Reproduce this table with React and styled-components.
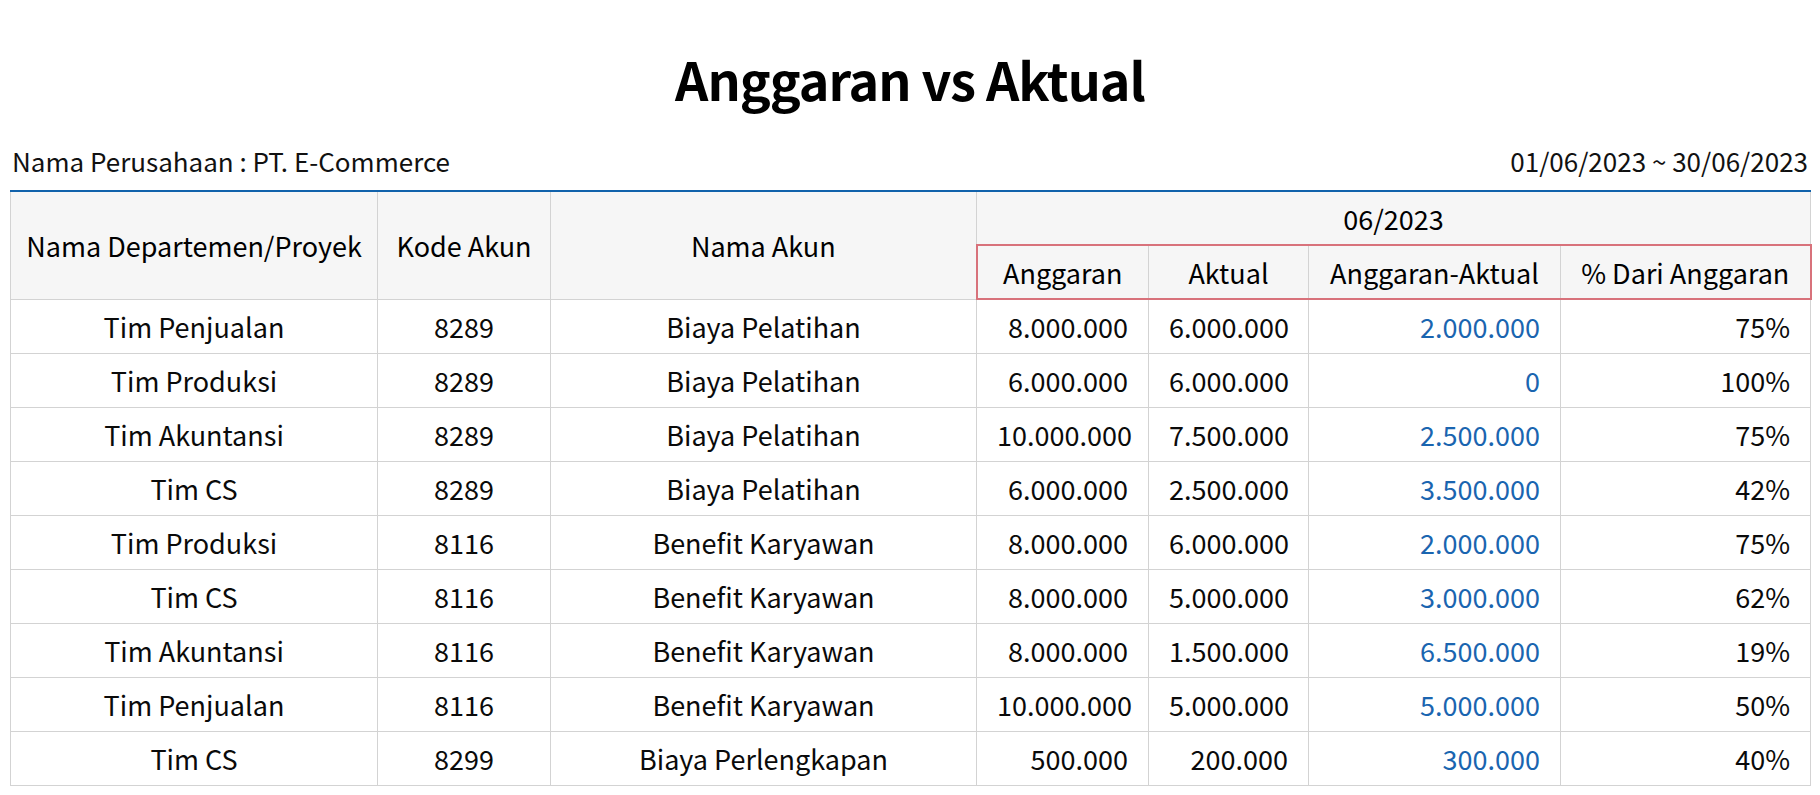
import React from "react";
import styled, { createGlobalStyle, css } from "styled-components";

const GlobalStyle = createGlobalStyle`
  body {
    margin: 0;
    background: #fff;
    font-family: "Noto Sans CJK KR", "Noto Sans", sans-serif;
    color: #111;
  }
`;

const Page = styled.div`
  padding: 0 10px;
`;

const Title = styled.h1`
  margin: 46px 0 0;
  font-size: 52px;
  line-height: 66px;
  letter-spacing: -1px;
  font-weight: 700;
  text-align: center;
  color: #000;
`;

const InfoBar = styled.div`
  display: flex;
  justify-content: space-between;
  align-items: flex-end;
  margin-top: 33px;
  padding: 0 2px 13px;
  font-size: 26px;
  line-height: 32px;
`;

const Table = styled.table`
  width: 1800px;
  border-collapse: collapse;
  table-layout: fixed;
  border-top: 2px solid #1162ab;
`;

const Th = styled.th`
  height: 52px;
  padding: 0;
  background: #f6f6f6;
  border: 1px solid #d3d3d3;
  border-top: none;
  font-size: 27px;
  font-weight: 400;
  text-align: center;
  vertical-align: middle;
  color: #000;
  ${(p) =>
    p.$marked &&
    css`
      border-top: 2px solid #d8727b;
      border-bottom: 2px solid #d8727b;
    `}
  ${(p) => p.$first && css`border-left: 2px solid #d8727b;`}
  ${(p) => p.$last && css`border-right: 2px solid #d8727b;`}
`;

const Td = styled.td`
  height: 53px;
  padding: 0 20px;
  border: 1px solid #d3d3d3;
  font-size: 27px;
  text-align: ${(p) => (p.$num ? "right" : "center")};
  color: ${(p) => (p.$blue ? "#1a65b0" : "#0a0a0a")};
  white-space: nowrap;
`;

const columns = [367, 173, 426, 172, 160, 252, 250];

const rows = [
  ["Tim Penjualan", "8289", "Biaya Pelatihan", "8.000.000", "6.000.000", "2.000.000", "75%"],
  ["Tim Produksi", "8289", "Biaya Pelatihan", "6.000.000", "6.000.000", "0", "100%"],
  ["Tim Akuntansi", "8289", "Biaya Pelatihan", "10.000.000", "7.500.000", "2.500.000", "75%"],
  ["Tim CS", "8289", "Biaya Pelatihan", "6.000.000", "2.500.000", "3.500.000", "42%"],
  ["Tim Produksi", "8116", "Benefit Karyawan", "8.000.000", "6.000.000", "2.000.000", "75%"],
  ["Tim CS", "8116", "Benefit Karyawan", "8.000.000", "5.000.000", "3.000.000", "62%"],
  ["Tim Akuntansi", "8116", "Benefit Karyawan", "8.000.000", "1.500.000", "6.500.000", "19%"],
  ["Tim Penjualan", "8116", "Benefit Karyawan", "10.000.000", "5.000.000", "5.000.000", "50%"],
  ["Tim CS", "8299", "Biaya Perlengkapan", "500.000", "200.000", "300.000", "40%"],
];

const subHeads = ["Anggaran", "Aktual", "Anggaran-Aktual", "% Dari Anggaran"];

export default function App() {
  return (
    <Page>
      <GlobalStyle />
      <Title>Anggaran vs Aktual</Title>
      <InfoBar>
        <span>Nama Perusahaan : PT. E-Commerce</span>
        <span>01/06/2023 ~ 30/06/2023</span>
      </InfoBar>
      <Table>
        <colgroup>
          {columns.map((w, i) => (
            <col key={i} style={{ width: w }} />
          ))}
        </colgroup>
        <thead>
          <tr>
            <Th rowSpan={2}>Nama Departemen/Proyek</Th>
            <Th rowSpan={2}>Kode Akun</Th>
            <Th rowSpan={2}>Nama Akun</Th>
            <Th colSpan={4}>06/2023</Th>
          </tr>
          <tr>
            {subHeads.map((h, i) => (
              <Th key={h} $marked $first={i === 0} $last={i === subHeads.length - 1}>
                {h}
              </Th>
            ))}
          </tr>
        </thead>
        <tbody>
          {rows.map((r, i) => (
            <tr key={i}>
              <Td>{r[0]}</Td>
              <Td>{r[1]}</Td>
              <Td>{r[2]}</Td>
              <Td $num>{r[3]}</Td>
              <Td $num>{r[4]}</Td>
              <Td $num $blue>{r[5]}</Td>
              <Td $num>{r[6]}</Td>
            </tr>
          ))}
        </tbody>
      </Table>
    </Page>
  );
}
